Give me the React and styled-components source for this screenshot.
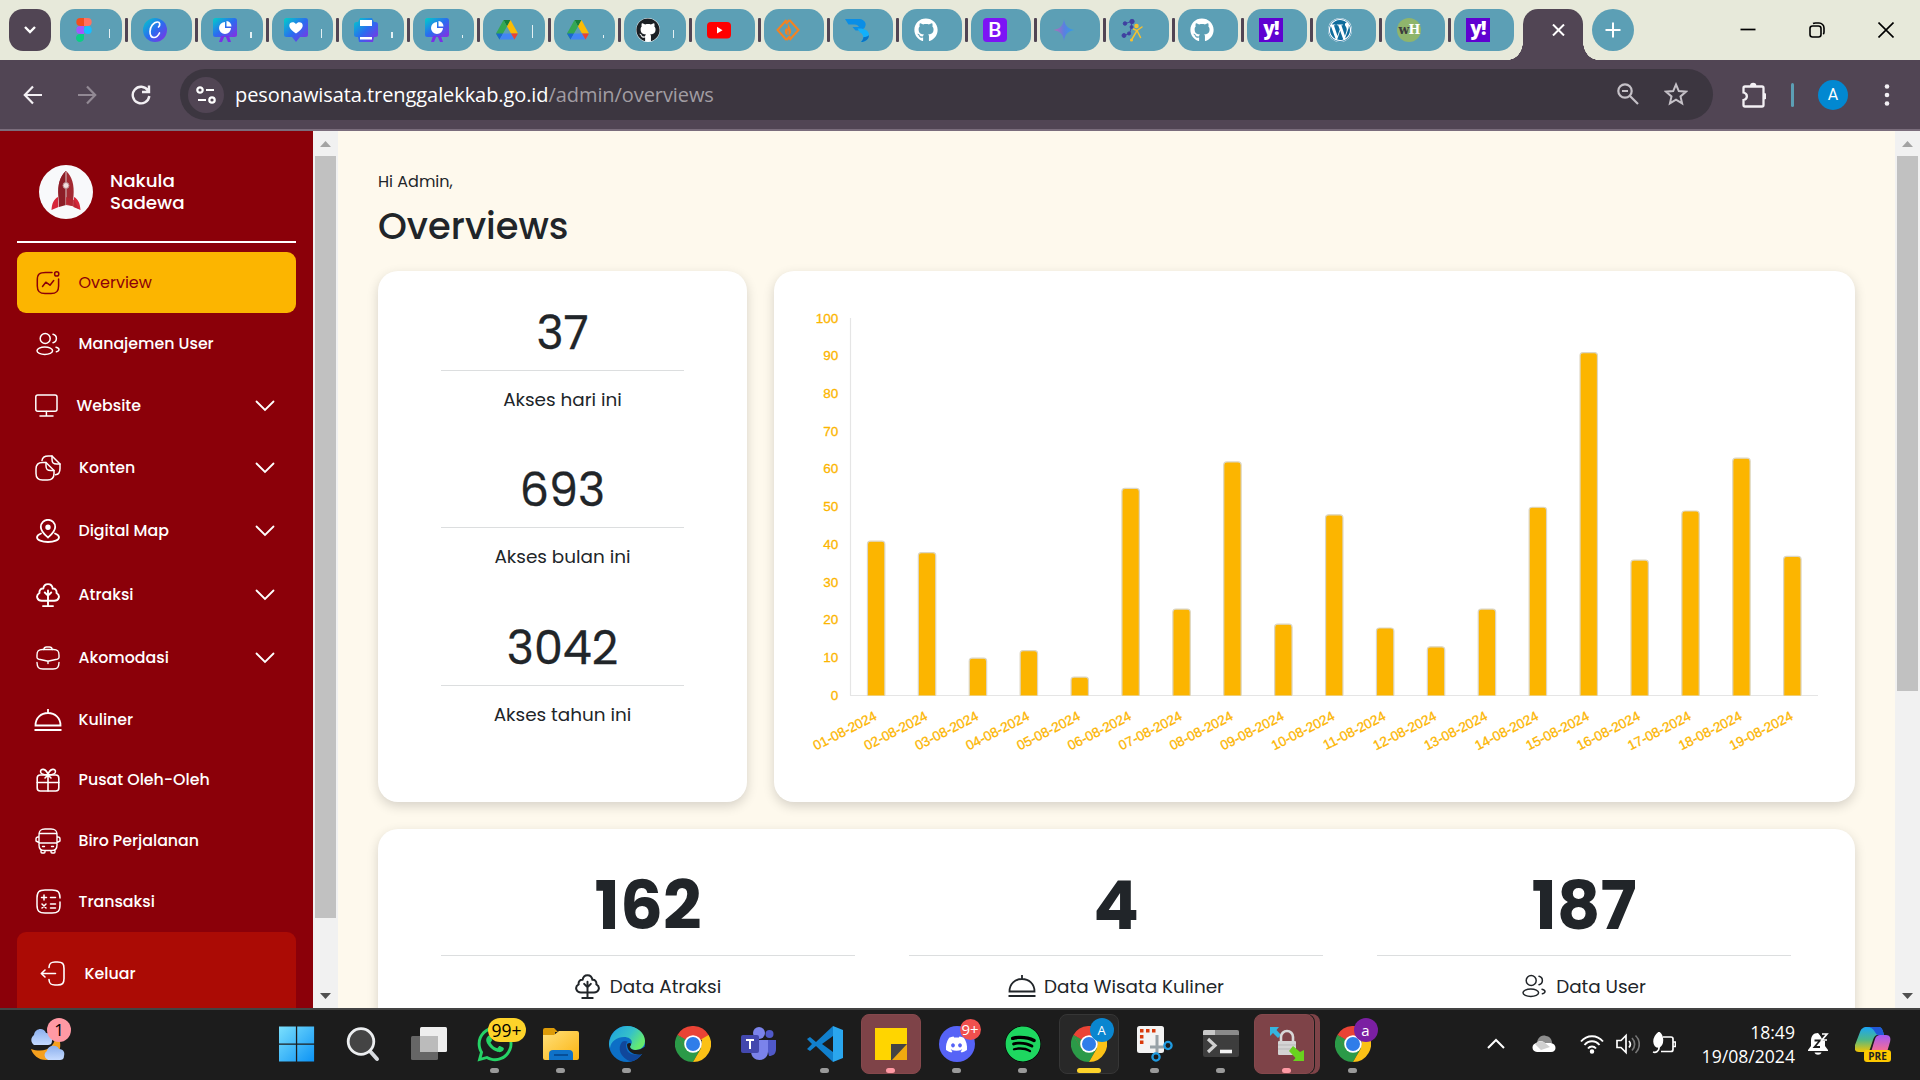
import React from 'react';
import styled, { createGlobalStyle } from 'styled-components';
import { FaGithub, FaWhatsapp, FaDiscord, FaSpotify, FaWordpress } from 'react-icons/fa';

const poppins = `Poppins, Inter, "Open Sans", sans-serif`;
const segoe = `"Open Sans", "Noto Sans", sans-serif`;

const Global = createGlobalStyle`
  * { box-sizing: border-box; }
  body { margin: 0; overflow: hidden; background: #fef9ed; }
  svg { display: block; flex: none; }
`;

const Screen = styled.div`
  width: 1920px;
  height: 1080px;
  display: flex;
  flex-direction: column;
  overflow: hidden;
  font-family: ${poppins};
  color: #212529;
`;

/* ---------- browser chrome ---------- */
const TabStrip = styled.div`
  height: 60px;
  flex: none;
  display: flex;
  align-items: center;
  padding-left: 9px;
  background: #e7e9da;
`;
const TabSearch = styled.div`
  width: 42px;
  height: 42px;
  margin-right: 9px;
  border-radius: 14px;
  background: #514554;
  display: grid;
  place-items: center;
`;
const Tab = styled.div`
  width: ${(p) => (p.$wide ? 61.55 : 60)}px;
  height: 42px;
  flex: none;
  border-radius: 15px;
  background: #5c9fb5;
  display: flex;
  align-items: center;
  padding-left: 12px;
`;
const TitleSliver = styled.i`
  width: ${(p) => p.$w || 1}px;
  height: ${(p) => p.$h}px;
  margin-left: 13px;
  margin-top: ${(p) => 16 - p.$h}px;
  align-self: center;
  background: #e4f0f3;
`;
const TabDivider = styled.i`
  width: 3px;
  height: 24px;
  flex: none;
  margin: 0 3px;
  border-radius: 1px;
  background: #514554;
`;
const TabGap = styled.i`
  width: 9px;
  flex: none;
`;
const ActiveTab = styled.div`
  position: relative;
  width: 60px;
  height: 51px;
  align-self: flex-end;
  flex: none;
  border-radius: 15px 15px 0 0;
  background: #514554;
  padding: 15px 0 0 26px;
  &::before,
  &::after {
    content: '';
    position: absolute;
    bottom: 0;
    width: 15px;
    height: 18px;
  }
  &::before {
    left: -15px;
    background: radial-gradient(ellipse 15px 18px at 0 0, transparent 98%, #514554 100%);
  }
  &::after {
    right: -15px;
    background: radial-gradient(ellipse 15px 18px at 100% 0, transparent 98%, #514554 100%);
  }
`;
const NewTab = styled.div`
  width: 42px;
  height: 42px;
  margin-left: 9px;
  border-radius: 50%;
  background: #5c9fb5;
  display: grid;
  place-items: center;
`;
const WindowButtons = styled.div`
  display: flex;
  margin-left: auto;
`;
const WindowButton = styled.div`
  width: 69px;
  height: 60px;
  display: grid;
  place-items: center;
`;

const Toolbar = styled.div`
  height: 71px;
  flex: none;
  display: flex;
  align-items: center;
  padding-left: 6px;
  background: #514554;
  border-bottom: 2px solid #7a6d7c;
`;
const NavButton = styled.div`
  width: 54px;
  display: grid;
  place-items: center;
  opacity: ${(p) => (p.$dim ? 0.4 : 1)};
`;
const AddressBar = styled.div`
  width: 1533px;
  height: 51px;
  margin-left: 12px;
  padding: 0 25px 0 8px;
  border-radius: 26px;
  background: #3c3640;
  display: flex;
  align-items: center;
`;
const SiteInfo = styled.div`
  width: 36px;
  height: 36px;
  border-radius: 50%;
  background: #514554;
  display: grid;
  place-items: center;
`;
const Url = styled.div`
  flex: 1;
  margin-left: 11px;
  font: 400 20px/30px ${segoe};
  letter-spacing: -0.08px;
  color: #a19da3;
  white-space: nowrap;
  span { color: #fff; }
`;
const BarIcons = styled.div`
  display: flex;
  gap: 24px;
  padding-bottom: 1px;
`;
const ToolbarEnd = styled.div`
  display: flex;
  align-items: center;
  margin-left: 27px;
`;
const Rule = styled.i`
  width: 3px;
  height: 24px;
  margin: 0 24px 0 25px;
  border-radius: 2px;
  background: #5c9fb5;
`;
const ProfileDot = styled.div`
  width: 30px;
  height: 30px;
  margin-right: 28px;
  border-radius: 50%;
  background: #0288d1;
  color: #fff;
  font: 400 16px/30px Roboto, sans-serif;
  text-align: center;
`;

/* ---------- page ---------- */
const Page = styled.div`
  height: 877px;
  flex: none;
  display: flex;
  overflow: hidden;
  background: #fef9ed;
`;
const Sidebar = styled.nav`
  width: 313px;
  flex: none;
  padding: 34px 17px 0;
  background: #8b0009;
  color: #fff;
`;
const Brand = styled.div`
  height: 76px;
  padding-left: 22px;
  display: flex;
  align-items: flex-start;
  gap: 17px;
`;
const BrandName = styled.div`
  padding-top: 5px;
  font-size: 18.3px;
  font-weight: 500;
  line-height: 22px;
`;
const Divider = styled.div`
  height: 2px;
  margin-bottom: 9px;
  background: #fff;
`;
const MenuItem = styled.div`
  height: ${(p) => p.$h}px;
  padding: 0 21px 0 ${(p) => 19 + (p.$shift || 0)}px;
  display: flex;
  align-items: center;
  border-radius: 9px;
  background: ${(p) => (p.$active ? '#fcb500' : 'transparent')};
  color: ${(p) => (p.$active ? '#8b0009' : '#fff')};
  font-size: ${(p) => (p.$active ? 16 : 15.8)}px;
  font-weight: ${(p) => (p.$active ? 400 : 500)};
`;
const MenuLabel = styled.span`
  flex: 1;
  margin-left: ${(p) => 18.5 + (p.$dx || 0)}px;
  white-space: nowrap;
`;
const Logout = styled(MenuItem)`
  height: 83px;
  margin-top: 1px;
  padding-left: 23px;
  border-radius: 9px 9px 0 0;
  background: #ab0b05;
`;

const Scrollbar = styled.div`
  width: 25px;
  flex: none;
  display: flex;
  flex-direction: column;
  align-items: center;
  background: #f1f1f1;
`;
const ScrollArrow = styled.div`
  height: 25px;
  flex: none;
  display: grid;
  place-items: center;
`;
const ScrollThumb = styled.div`
  width: 21px;
  height: ${(p) => p.$h}px;
  background: #c1c1c1;
`;
const Grow = styled.div`
  flex: 1;
`;

const Main = styled.main`
  width: 1557px;
  flex: none;
  padding: 38px 40px 0;
`;
const Greeting = styled.div`
  font-size: 16px;
  line-height: 26px;
`;
const Title = styled.h1`
  margin: 8px 0 22px;
  font-size: 36.8px;
  font-weight: 500;
  line-height: 46px;
`;
const TopCards = styled.div`
  display: grid;
  grid-template-columns: 369px 1081px;
  gap: 27px;
  height: 531px;
`;
const Card = styled.section`
  border-radius: 20px;
  background: #fff;
  box-shadow: 0 4px 12px rgba(0, 0, 0, 0.16);
`;
const AccessCard = styled(Card)`
  padding: 34px 63px 0;
`;
const Access = styled.div`
  height: 157.4px;
  text-align: center;
`;
const AccessValue = styled.div`
  height: 66px;
  border-bottom: 1px solid #dcdedf;
  font-size: 46px;
  font-weight: 400;
  line-height: 56px;
  -webkit-text-stroke: 0.3px #212529;
`;
const AccessLabel = styled.div`
  margin-top: 15px;
  font-size: 18.4px;
  line-height: 28px;
`;
const TotalsCard = styled(Card)`
  height: 260px;
  margin-top: 27px;
  padding: 37px 63px 0;
  display: grid;
  grid-template-columns: repeat(3, 414px);
  column-gap: 54px;
  text-align: center;
`;
const TotalValue = styled.div`
  height: 90px;
  border-bottom: 1px solid #dcdedf;
  font-size: 67.5px;
  font-weight: 700;
  line-height: 80px;
`;
const TotalLabel = styled.div`
  display: flex;
  justify-content: center;
  align-items: center;
  gap: ${(p) => p.$gap || 10}px;
  height: 28px;
  margin-top: 16px;
  font-size: 18.4px;
  white-space: nowrap;
`;

/* ---------- taskbar ---------- */
const Taskbar = styled.div`
  height: 72px;
  flex: none;
  display: flex;
  padding-left: 26px;
  border-top: 2px solid #434343;
  background: #1c1c1c;
  color: #fff;
  font-family: ${segoe};
`;
const Weather = styled.div`
  position: relative;
  width: 44px;
  height: 70px;
  margin-right: 193.5px;
  padding-top: 15px;
`;
const Apps = styled.div`
  display: flex;
`;
const AppSlot = styled.div`
  position: relative;
  width: 66px;
  height: 70px;
  display: grid;
  place-items: center;
`;
const AppTile = styled.div`
  width: 60px;
  height: 60px;
  margin-top: -2px;
  display: grid;
  place-items: center;
  border-radius: 8px;
  border: 1px solid ${(p) => (p.$tone === 'alert' ? '#85484c' : p.$tone ? '#363636' : 'transparent')};
  background: ${(p) => (p.$tone === 'alert' ? '#7e4348' : p.$tone ? '#282828' : 'transparent')};
  box-shadow: ${(p) => (p.$stack ? '1px 0 0 #1c1c1c, 6px 0 0 #7e4348' : 'none')};
  margin-left: ${(p) => (p.$stack ? -6 : 0)}px;
  padding-left: ${(p) => (p.$stack ? 6 : 0)}px;
`;
const RunDot = styled.i`
  position: absolute;
  bottom: 7px;
  left: 50%;
  width: ${(p) => (p.$wide ? 24 : 9)}px;
  height: 5px;
  margin-left: ${(p) => (p.$wide ? -12 : -4.5)}px;
  border-radius: 3px;
  background: ${(p) => p.$color || '#9a9a9a'};
`;
const Badge = styled.span`
  position: absolute;
  top: ${(p) => p.$top || 8}px;
  left: ${(p) => p.$left}px;
  min-width: ${(p) => p.$size || 24}px;
  height: ${(p) => p.$size || 24}px;
  padding: 0 ${(p) => p.$pad || 0}px;
  border-radius: 12px;
  background: ${(p) => p.$bg};
  color: ${(p) => p.$fg || '#fff'};
  font-size: ${(p) => p.$fs || 15}px;
  line-height: ${(p) => p.$size || 24}px;
  text-align: center;
  white-space: nowrap;
`;
const Tray = styled.div`
  display: flex;
  align-items: center;
  margin-left: auto;
  padding: 0 29px 2px 0;
`;
const Clock = styled.div`
  width: 106px;
  margin-left: 13px;
  text-align: right;
  font-size: 17.6px;
  line-height: 24px;
`;

/* ---------- icons ---------- */
const Line = ({ size = 24, w = 1.5, children, box = 24 }) => (
  <svg width={size} height={size} viewBox={`0 0 ${box} ${box}`} fill="none" stroke="currentColor" strokeWidth={w} strokeLinecap="round" strokeLinejoin="round">
    {children}
  </svg>
);
const OverviewIcon = () => (
  <Line>
    <path d="M16 1.4H9.5C3.5 1.4 1.3 3.2 1.3 9v6c0 5.5 2.200 7.600 7.700 7.600h6c5.500 0 7.600-2.100 7.600-7.600V8" />
    <circle cx="20.7" cy="2.9" r="2.100" />
    <path d="M6.500 15.500l3.300-4.300 4.200 3 3.700-4.700" />
  </Line>
);
const UsersIcon = ({ size = 24 }) => (
  <Line size={size}>
    <circle cx="9.200" cy="6.500" r="5" />
    <ellipse cx="8.800" cy="18.800" rx="7.800" ry="3.700" />
    <path d="M17 2.300a4.300 4.300 0 0 1 0 8.400M20 15.200c1.800.4 3 1.200 3 2.300s-1 1.900-2.600 2.300" />
  </Line>
);
const MonitorIcon = () => (
  <Line size={23} box={23}>
    <rect x=".8" y="1" width="21.200" height="16.200" rx="2" />
    <path d="M11.400 17.500v4.500M5 22h13" />
  </Line>
);
const CopyIcon = () => (
  <Line size={26} box={26}>
    <path d="M11 7.500H7.500C3 7.500 1 9.500 1 14v4.500C1 23 3 25 7.500 25h5c4.500 0 6.500-2 6.500-6.500V15.500z" />
    <path d="M11 7.500v3.200c0 3.600 1.200 4.800 4.800 4.800H19" />
    <path d="M7 5.500c.4-3.300 2.400-4.500 6.300-4.500H17l8 8v4.500c0 4-1.700 6-4.600 6.200" />
    <path d="M17 1v3.200C17 7.800 18.200 9 21.800 9H25" />
  </Line>
);
const MapIcon = () => (
  <Line w={1.8}>
    <path d="M12 18.500C8.500 15.500 4.800 12.500 4.800 8a7.200 7.200 0 0 1 14.400 0c0 4.500-3.700 7.500-7.200 10.500z" />
    <circle cx="12" cy="8.300" r="1.800" fill="currentColor" />
    <path d="M5 14.500C2.500 15.500 1 16.500 1 18.200 1 21 5.900 23 12 23s11-2 11-4.800c0-1.700-1.500-2.700-4-3.700" />
  </Line>
);
const TreeIcon = ({ size = 25 }) => (
  <Line size={size} w={1.9}>
    <path d="M7 17.700C1 18.500-.8 12.500 3.500 10 3 7.200 5 5.200 7.300 5.600 8-.4 16-.4 16.700 5.600 19 5.200 21 7.200 20.500 10c4.300 2.500 2.500 8.500-3.500 7.700z" />
    <path d="M12 7.500V23M8.800 9.500L12 12.700l3.200-3.200M7 23.100h10" />
  </Line>
);
const CaseIcon = () => (
  <Line w={1.4}>
    <path d="M7.800 3.500C8 1.500 9 1 10.500 1h3c1.500 0 2.500.5 2.700 2.500" />
    <path d="M1 9c0-4 1.300-5.500 5.500-5.500h11C21.700 3.500 23 5 23 9v2.500c0 1-.8 1.500-2 1.800l-7 1.500c-1.300.3-2.700.3-4 0l-7-1.500C1.800 13 1 12.500 1 11.500zM1 16.500C1.200 21.500 2.500 23 7 23h10c4.500 0 5.800-1.500 6-6.500M12 15v2.500" />
  </Line>
);
const ClocheIcon = () => (
  <svg width="28" height="24" viewBox="0 0 28 24" fill="none" stroke="currentColor" strokeWidth="1.8">
    <path d="M1.500 17.500C1.500 10 7 5 14 5s12.500 5 12.500 12.500zM14 5V1M.5 22h27" />
  </svg>
);
const GiftIcon = () => (
  <Line w={1.6}>
    <rect x="1.200" y="7" width="21.600" height="16" rx="3" />
    <path d="M1.200 14.500h21.600M12 7v16M12 6.800C9 6.800 5 7 4.600 4 4 .2 10 0 12 6.500c2-6.500 8-6.300 7.400-2.500-.4 3-4.400 2.800-7.400 2.800zM9 10l3-3 3 3" />
  </Line>
);
const BusIcon = () => (
  <Line size={26} w={1.4} box={26}>
    <path d="M4 7c0-4.500 1.500-6 6-6h6c4.500 0 6 1.500 6 6v10c0 3.500-1.500 5.500-5 5.500H9c-3.500 0-5-2-5-5.500zM4 5.500h18M4 15h18M4 9H3a2 2 0 0 0-2 2v2l3 1.500M22 9h1a2 2 0 0 1 2 2v2l-3 1.500M7.500 18.500h2M16.500 18.500h2M6 22v2c0 .6.400 1 1 1h2c.6 0 1-.4 1-1v-1.500M20 22v2c0 .6-.4 1-1 1h-2c-.6 0-1-.4-1-1v-1.500" />
  </Line>
);
const CalcIcon = () => (
  <Line size={25} w={1.5} box={25}>
    <path d="M24 9c0-6-2-8-8-8H9C3 1 1 3 1 9v7c0 6 2 8 8 8h7c6 0 8-2 8-8v-3" />
    <path d="M5.500 8.500h5M8 6v5M14.500 8.500h5M14.500 15h5M14.500 19h5M6 15l4 4M10 15l-4 4" />
  </Line>
);
const LogoutIcon = () => (
  <Line size={25} w={1.6} box={25}>
    <path d="M9 6.500C9.200 2.500 10.500 1 15 1h2.500C22.500 1 24 2.500 24 7.500v10c0 5-1.500 6.500-6.500 6.500H15c-4.500 0-5.800-1.500-6-5.500M15.500 12.500H1.500M5 9l-3.700 3.500L5 16" />
  </Line>
);
const Chevron = () => (
  <svg width="20" height="12" viewBox="0 0 20 12" fill="none" stroke="#fff" strokeWidth="1.8" strokeLinecap="round">
    <path d="M1.500 1.500L10 10l8.500-8.500" />
  </svg>
);

/* ---------- favicons ---------- */
const Fav = ({ children, box = 24 }) => (
  <svg width="24" height="24" viewBox={`0 0 ${box} ${box}`}>{children}</svg>
);
const Figma = () => (
  <Fav>
    <path d="M12 0H8.300a4 4 0 0 0 0 8H12z" fill="#f24e1e" />
    <path d="M12 0h3.700a4 4 0 0 1 0 8H12z" fill="#ff7262" />
    <path d="M12 8H8.300a4 4 0 0 0 0 8H12z" fill="#a259ff" />
    <circle cx="15.800" cy="12" r="4" fill="#1abcfe" />
    <path d="M12 16H8.300a4 4 0 1 0 3.700 4z" fill="#0acf83" />
  </Fav>
);
const Gradients = () => (
  <svg width="0" height="0" style={{ position: 'absolute' }}>
    <defs>
      <linearGradient id="canva" x1="0" y1="0" x2="1" y2="1">
        <stop offset="0" stopColor="#00d0c8" />
        <stop offset=".5" stopColor="#2a6cf0" />
        <stop offset="1" stopColor="#8a2be2" />
      </linearGradient>
      <linearGradient id="gem" x1="0" y1="0" x2="1" y2="0">
        <stop offset="0" stopColor="#c06ab0" />
        <stop offset=".5" stopColor="#5a80e0" />
        <stop offset="1" stopColor="#2fa0e8" />
      </linearGradient>
      <linearGradient id="win" x1="0" y1="0" x2="1" y2="1">
        <stop offset="0" stopColor="#7be0fd" />
        <stop offset="1" stopColor="#0c93f5" />
      </linearGradient>
      <linearGradient id="edgeTop" x1="0" y1="0" x2="1" y2=".5">
        <stop offset="0" stopColor="#1b9de2" />
        <stop offset=".6" stopColor="#35c1c9" />
        <stop offset="1" stopColor="#66eb6e" />
      </linearGradient>
      <linearGradient id="folder" x1="0" y1="0" x2="1" y2="1">
        <stop offset="0" stopColor="#ffe07a" />
        <stop offset="1" stopColor="#fbb411" />
      </linearGradient>
      <linearGradient id="cloud" x1="0" y1="0" x2="0" y2="1">
        <stop offset="0" stopColor="#8cb0ee" />
        <stop offset="1" stopColor="#c6dbff" />
      </linearGradient>
      <linearGradient id="copA" x1="0" y1="0" x2="0" y2="1">
        <stop offset="0" stopColor="#1ba5f5" />
        <stop offset=".5" stopColor="#4cb88a" />
        <stop offset="1" stopColor="#f5c400" />
      </linearGradient>
      <linearGradient id="copB" x1="0" y1="0" x2="0" y2="1">
        <stop offset="0" stopColor="#a259f5" />
        <stop offset="1" stopColor="#ff6f8a" />
      </linearGradient>
    </defs>
  </svg>
);
const Canva = () => (
  <Fav>
    <circle cx="12" cy="12" r="12" fill="url(#canva)" />
    <path d="M15.500 9c2-2 1.500-5-1-5C10.500 4 7 9 7 13.500c0 3.500 1.500 6 4 6 2.300 0 4.200-1.700 5.500-4.500" fill="none" stroke="#fff" strokeWidth="1.700" strokeLinecap="round" />
  </Fav>
);
const Deck = () => (
  <Fav>
    <rect width="24" height="19" rx="2.500" fill="url(#canva)" />
    <path d="M8 18l-2 6h3l2.500-6zM16 18l2 6h-3l-2.500-6z" fill="#7a2fe8" />
    <path d="M12 10V4a6 6 0 1 0 6 6z" fill="#fff" />
    <path d="M13.500 8.500V3a5.500 5.500 0 0 1 5 5.500z" fill="#fff" />
  </Fav>
);
const Heart = () => (
  <Fav>
    <path d="M2.500 0h19A2.500 2.500 0 0 1 24 2.500v14a2.500 2.500 0 0 1-2.500 2.500H16l-4 5-4-5H2.500A2.500 2.500 0 0 1 0 16.500v-14A2.500 2.500 0 0 1 2.500 0z" fill="url(#canva)" />
    <path d="M12 15.500C8 12.500 5.300 10.500 5.300 7.500c0-3.500 4.700-4.500 6.700-1.300 2-3.200 6.700-2.200 6.700 1.300 0 3-2.700 5-6.700 8z" fill="#fff" />
  </Fav>
);
const Print = () => (
  <Fav>
    <path d="M6 0h12l2 4h1.500A2.500 2.500 0 0 1 24 6.500v10a2.500 2.500 0 0 1-2.500 2.500H20l-1 5H5l-1-5H2.500A2.500 2.500 0 0 1 0 16.500v-10A2.500 2.500 0 0 1 2.500 4H4z" fill="url(#canva)" />
    <path d="M6 2h12v6H6zM6 19h12v2.500H6z" fill="#fff" />
  </Fav>
);
const Drive = () => (
  <Fav>
    <path d="M8.500 2h7L12 8.500z" fill="#188038" />
    <path d="M8.500 2L1 15.500l3.500 6L12 8.500z" fill="#34a853" />
    <path d="M15.500 2L23 15.500h-7L12 8.500z" fill="#fbbc04" />
    <path d="M1 15.500h7l-3.500 6z" fill="#1967d2" />
    <path d="M8 15.500h8l3.500 6h-15z" fill="#4285f4" />
    <path d="M16 15.500h7l-3.500 6z" fill="#ea4335" />
  </Fav>
);
const GithubDisc = styled.div`
  width: 24px;
  height: 24px;
  border-radius: 50%;
  background: ${(p) => p.$bg || 'transparent'};
  color: ${(p) => p.$fg};
`;
const Youtube = () => (
  <Fav>
    <rect y="4" width="24" height="16.500" rx="4" fill="#f00" />
    <path d="M10 8.800l5.500 3.400-5.500 3.400z" fill="#fff" />
  </Fav>
);
const Fire = () => (
  <Fav>
    <path d="M10.500 2L1.500 12l9 10M13.500 2l9 10-9 10M13.500 2L10 6M10.500 22l3.500-4" fill="none" stroke="#f58220" strokeWidth="2" />
    <path d="M12.300 5.500c.5 3 2.900 5 2.900 8 0 2-1.400 3.500-3.200 3.500s-3.200-1.500-3.200-3.500c0-1.800 1-2.800 1.800-3.800.2.800.4 1.300.8 1.600.5-1.700.2-3.800.9-5.800z" fill="#f58220" />
    <path d="M12 12.500v4" stroke="#5c9fb5" strokeWidth="1" />
  </Fav>
);
const BlueMark = () => (
  <Fav>
    <path d="M0 1h14.500c5 .5 8 4.500 5 9-3 2.500-6.500 2.500-9 2.500L7.500 9H14c-1.500-2.500-3.500-2.500-6-2.500H3.500z" fill="#0a8ee6" />
    <path d="M12.500 10.500c7-.5 11.500 2 11.500 6.500s-3.500 6.500-8.500 7.500c3.500-4 3.500-8-.5-10z" fill="#12b0fa" />
    <path d="M24 17c0 4.500-3.500 6.500-8.500 7.500 2-2 3-4 3-5.500 2.500 0 4.500-.5 5.500-2z" fill="#0a72c4" />
  </Fav>
);
const TextFav = styled.div`
  width: 24px;
  height: 24px;
  border-radius: ${(p) => p.$r || 0};
  background: ${(p) => p.$bg};
  color: #fff;
  font: ${(p) => p.$font};
  letter-spacing: ${(p) => p.$ls || 0};
  text-align: center;
  white-space: nowrap;
  span { color: #3c3c3c; }
`;
const Gem = () => (
  <Fav><path d="M12 1c.8 6.500 4 10 10.500 11-6.500 1-9.700 4.500-10.500 11-.8-6.500-4-10-10.500-11C8 11 11.200 7.500 12 1z" fill="url(#gem)" /></Fav>
);
const Network = () => (
  <Fav>
    <g stroke="#3f3fa0" strokeWidth=".9" fill="#3f3fa0">
      <path d="M4 5.500l6.500-2 0 5.500-2 6.500-5.500 2" fill="none" />
      <circle cx="4" cy="5.500" r="1.800" /><circle cx="11" cy="3.500" r="2.200" /><circle cx="3" cy="17.500" r="2" /><circle cx="8" cy="15.500" r="1.600" /><circle cx="10.500" cy="9" r="1.500" />
    </g>
    <g stroke="#f6c12f" strokeWidth="1.500" fill="#f6c12f" strokeLinecap="round">
      <path d="M21 9l-5 3.500-5.500 9.500M12.500 11l3.500 1.500 3.500 7" fill="none" /><circle cx="15.500" cy="8" r="1.500" /><circle cx="10.500" cy="22" r=".8" />
    </g>
  </Fav>
);
const Wordpress = styled.div`
  width: 24px;
  height: 24px;
  border-radius: 50%;
  background: #fff;
  color: #0f6c9c;
`;
const Yahoo = () => (
  <TextFav $bg="#5f01d1" $font='800 19px/21px "Open Sans", sans-serif' $ls="-1px">y!</TextFav>
);

const tabs = [
  { icon: <Figma />, h: 9 },
  { icon: <Canva /> },
  { icon: <Deck />, h: 6, w: 2 },
  { icon: <Heart />, h: 9 },
  { icon: <Print />, h: 6, w: 2 },
  { icon: <Deck />, h: 3 },
  { icon: <Drive />, h: 13 },
  { icon: <Drive />, h: 3 },
  { icon: <GithubDisc $bg="#fff" $fg="#1b1f24"><FaGithub size={24} /></GithubDisc>, h: 8 },
  { icon: <Youtube /> },
  { icon: <Fire /> },
  { icon: <BlueMark /> },
  { icon: <GithubDisc $fg="#fff"><FaGithub size={24} /></GithubDisc> },
  { icon: <TextFav $bg="#7d14f5" $r="4px" $font='500 21px/24px Roboto, sans-serif'>B</TextFav> },
  { icon: <Gem /> },
  { icon: <Network /> },
  { icon: <GithubDisc $fg="#fff"><FaGithub size={24} /></GithubDisc> },
  { icon: <Yahoo /> },
  { icon: <Wordpress><FaWordpress size={24} /></Wordpress> },
  { icon: <TextFav $bg="#8fb56c" $r="50%" $font='700 12.5px/23px "DejaVu Serif", serif' $ls="-0.8px"><span>w</span>H</TextFav> },
  { icon: <Yahoo /> },
];

const menu = [
  { label: 'Overview', icon: <OverviewIcon />, h: 61, active: true },
  { label: 'Manajemen User', icon: <UsersIcon />, h: 61 },
  { label: 'Website', icon: <MonitorIcon />, h: 63, sub: true, shift: -1, dx: 0 },
  { label: 'Konten', icon: <CopyIcon />, h: 61, sub: true, shift: -1, dx: -0.5 },
  { label: 'Digital Map', icon: <MapIcon />, h: 65, sub: true },
  { label: 'Atraksi', icon: <TreeIcon size={24} />, h: 63, sub: true },
  { label: 'Akomodasi', icon: <CaseIcon />, h: 63, sub: true },
  { label: 'Kuliner', icon: <ClocheIcon />, h: 61, shift: -2, dx: -2 },
  { label: 'Pusat Oleh-Oleh', icon: <GiftIcon />, h: 59 },
  { label: 'Biro Perjalanan', icon: <BusIcon />, h: 63, shift: -1, dx: -1 },
  { label: 'Transaksi', icon: <CalcIcon />, h: 59, shift: -0.5, dx: -0.5 },
];

const visits = [41, 38, 10, 12, 5, 55, 23, 62, 19, 48, 18, 13, 23, 50, 91, 36, 49, 63, 37];

const VisitsChart = () => {
  const left = 77;
  const base = 424.5;
  const unit = 3.773;
  const step = 50.9;
  return (
    <svg width="1081" height="531" viewBox="0 0 1081 531" fontFamily='Arial, "Liberation Sans", sans-serif' fontSize="13.5" fill="#fcb500">
      <path d={`M${left - 0.5} 47V${base}M${left - 1} ${base}H1044`} stroke="#e5e5e5" strokeWidth="1.200" fill="none" />
      {Array.from({ length: 11 }, (_, i) => (
        <text key={i} x="64.2" y={base + 4.3 - i * 10 * unit} textAnchor="end" stroke="#fcb500" strokeWidth=".3">{i * 10}</text>
      ))}
      {visits.map((v, i) => {
        const cx = left + step * (i + 0.5) - 0.3;
        const top = base - v * unit + 0.4;
        const day = String(i + 1).padStart(2, '0');
        return (
          <g key={i}>
            <path d={`M${cx - 8.7} ${base}V${top + 3}q0-3 3-3h11.4q3 0 3 3V${base}`} stroke="#dcd6c4" strokeWidth="1.2" />
            <text transform={`translate(${cx + 1.5} ${base + 23.7}) rotate(-27)`} textAnchor="end" stroke="#fcb500" strokeWidth=".3">{`${day}-08-2024`}</text>
          </g>
        );
      })}
    </svg>
  );
};

const Rocket = () => (
  <svg width="54" height="54" viewBox="0 0 54 54">
    <circle cx="27" cy="27" r="27" fill="#f8f9fb" />
    <path d="M19 32c-4 2-6 6-6.500 13l7-3zM35 32c4 2 6 6 6.500 13l-7-3z" fill="#d7263a" />
    <path d="M27 6c-6 5-8.500 14-7.500 25l1 10 6.500-2 6.500 2 1-10C35.500 20 33 11 27 6z" fill="#a32a33" />
    <path d="M27 6v34l-7 2-.5-11C18.500 20 21 11 27 6z" fill="#8c1d27" />
    <path d="M27 7v33" stroke="#c9a3a5" strokeWidth="1.300" />
    <circle cx="27" cy="20.500" r="3" fill="#f2dede" stroke="#b98c8f" />
    <path d="M27 32l8 3 5 9-7-3-6-1z" fill="#b72633" opacity=".85" />
  </svg>
);

const Arrow = ({ down }) => (
  <svg width="11" height="6" viewBox="0 0 11 6"><path d={down ? 'M0 0h11L5.500 6z' : 'M0 6h11L5.500 0z'} fill={down ? '#505050' : '#a3a3a3'} /></svg>
);

/* ---------- taskbar drawings ---------- */
const Pic = ({ children, size = 36 }) => <svg width={size} height={size} viewBox="0 0 36 36">{children}</svg>;
const Chrome = () => (
  <Pic>
    <path d="M18 18L2.400 9A18 18 0 0 1 33.600 9z" fill="#ea4335" />
    <path d="M2.400 9A18 18 0 0 0 18 36l8-14z" fill="#2b9a48" />
    <path d="M33.600 9A18 18 0 0 1 18 36l7.800-13.500L27 14 18 9z" fill="#fbc116" />
    <path d="M18 9h15.600L18 18 2.400 9 10 22z" fill="#ea4335" />
    <path d="M2.400 9L10.200 22.500 18 18z" fill="#2b9a48" />
    <circle cx="18" cy="18" r="8.800" fill="#fff" />
    <circle cx="18" cy="18" r="7" fill="#2f7de9" />
  </Pic>
);
const Windows = () => (
  <Pic><path d="M0 .5H16.900V17.400H0zM18.200.5H35.100V17.400H18.200zM0 18.700H16.900V35.600H0zM18.200 18.700H35.100V35.600H18.200z" fill="url(#win)" /></Pic>
);
const Search = () => (
  <Pic>
    <path d="M24 24l8 9" stroke="#d8dbe0" strokeWidth="4" strokeLinecap="round" />
    <circle cx="16" cy="15.500" r="12.800" fill="#444" stroke="#eceef0" strokeWidth="2.800" />
  </Pic>
);
const TaskView = () => (
  <Pic>
    <rect x="9" y="1" width="27" height="25" rx="1.500" fill="#eee" />
    <rect x="0" y="10" width="27" height="24" rx="1.500" fill="#666" />
    <rect x="9" y="10" width="18" height="16" fill="#bbb" />
  </Pic>
);
const Explorer = () => (
  <Pic>
    <path d="M0 4q0-2 2-2h9l4 4h-3v6H0z" fill="#dd9b08" />
    <path d="M0 9h11l5-4h18q2 0 2 2v25q0 2-2 2H2q-2 0-2-2z" fill="url(#folder)" />
    <path d="M6 34V28q0-4 4-4h16q4 0 4 4v6z" fill="#0f72c8" />
    <path d="M11 29h14" stroke="#064a91" strokeWidth="1.800" />
  </Pic>
);
const Edge = () => (
  <Pic>
    <circle cx="18" cy="18" r="18" fill="#0c6fc6" />
    <path d="M1 13C4 4 11 0 18 0c10 0 18 7 18 15 0 6-5 9-9 9-5 0-7-2-5.500-4.500C25 15 21 11 15 11 8 11 2 15 1 22c-1.500-4-1-6 0-9z" fill="url(#edgeTop)" />
    <path d="M13 16c-5 6-2 16 9 19.500 5-1 9-4 11-8-5 2-14 2-15.500-5-1-3-.5-5 1-7-2-.8-4-.8-5.500.5z" fill="#10479b" />
    <path d="M18 19c0-2 4-3 4-.5 0 1-2 2 0 4 3 2.500 9 2 14-2V27c-6 3-17 2-18-8z" fill="#1c1c1c" />
  </Pic>
);
const Teams = () => (
  <Pic>
    <circle cx="28.500" cy="8" r="4" fill="#5059c9" />
    <path d="M24 14h11v9c0 5-3 7-7 7z" fill="#5059c9" />
    <circle cx="18" cy="7" r="6" fill="#7b83eb" />
    <path d="M10 14h17v11c0 6-4 9-8.500 9S10 31 10 25z" fill="#7b83eb" />
    <rect y="9" width="18" height="18" rx="2" fill="#4348ae" />
    <path d="M5 14h8M9 14v9" stroke="#fff" strokeWidth="2" />
  </Pic>
);
const VSCode = () => (
  <Pic>
    <path d="M26 0L9 16 3 11 0 13l5 5-5 5 3 2 6-5 17 16V26L15 18l11-8z" fill="#1180cd" />
    <path d="M26 0l10 4v28l-10 4z" fill="#2aa6ee" />
  </Pic>
);
const Sticky = () => (
  <Pic>
    <path d="M2 2h32v17l-15 15H2z" fill="#ffd500" />
    <path d="M18 34V18h16v16z" fill="#efaa10" />
    <path d="M18 18h16L19 34h-1z" fill="#444" />
  </Pic>
);
const Disc = styled.div`
  width: 36px;
  height: 36px;
  border-radius: 50%;
  background: ${(p) => p.$bg};
  color: ${(p) => p.$fg};
  display: grid;
  place-items: center;
`;
const Snip = () => (
  <Pic>
    <rect x="0" y="0" width="27" height="27" rx="2.500" fill="#f3f3f3" />
    <path d="M3 4.700h16.500" stroke="#d93a0b" strokeWidth="3.500" strokeDasharray="3.500 2.500" />
    <path d="M4.700 9v10" stroke="#d93a0b" strokeWidth="3.500" strokeDasharray="3.500 2" />
    <path d="M20 9v18M13 21h15" stroke="#98a2a8" strokeWidth="3" />
    <circle cx="31" cy="19.500" r="3.600" fill="none" stroke="#1f9ae0" strokeWidth="2.300" />
    <circle cx="19" cy="31" r="3.600" fill="none" stroke="#1f9ae0" strokeWidth="2.300" />
  </Pic>
);
const Terminal = () => (
  <Pic>
    <rect y="4" width="36" height="27" rx="2" fill="#3d3d3d" />
    <path d="M0 9V6q0-2 2-2h32q2 0 2 2v3z" fill="#8a8a8a" />
    <path d="M0 9V6q0-2 2-2h10v5z" fill="#c8c8c8" />
    <path d="M5 13l7 6.500L5 26" stroke="#d0d0d0" strokeWidth="3.200" fill="none" />
    <path d="M17 25.500h12" stroke="#f2f2f2" strokeWidth="3.600" />
  </Pic>
);
const Lock = () => (
  <Pic>
    <path d="M1 1h9l-2.500 3L12 9l-3 3-5-5-3 3z" fill="#35b5e0" />
    <path d="M12 16v-5a6 6 0 0 1 12 0v5" fill="none" stroke="#d8d8d8" strokeWidth="2.600" />
    <rect x="9" y="15" width="18" height="14" rx="1" fill="#d4d4d4" />
    <path d="M9 19h18M9 23h18" stroke="#b7b7b7" strokeWidth="1" />
    <path d="M24 20l7 6 4-2v11H24l2.500-3-6.500-7z" fill="#69d21e" />
  </Pic>
);
const apps = [
  { icon: <Windows /> },
  { icon: <Search /> },
  { icon: <TaskView /> },
  { icon: <FaWhatsapp size={40} color="#25d366" />, dot: true, badge: <Badge $left={26} $pad={4} $bg="#fdd32a" $fg="#000" $fs={17.5}>99+</Badge> },
  { icon: <Explorer />, dot: true },
  { icon: <Edge />, dot: true },
  { icon: <Chrome /> },
  { icon: <Teams /> },
  { icon: <VSCode />, dot: true },
  { icon: <Sticky />, dot: true, color: '#ff99a4', tone: 'alert' },
  { icon: <Disc $bg="#5663f7" $fg="#fff"><FaDiscord size={23} /></Disc>, dot: true, badge: <Badge $left={36} $top={9} $size={21} $bg="#f0504e" $fs={15}>9+</Badge> },
  { icon: <Disc $bg="#000" $fg="#1ed760"><FaSpotify size={36} /></Disc>, dot: true },
  { icon: <Chrome />, dot: true, wide: true, color: '#fdd32a', tone: 'active', badge: <Badge $left={34} $bg="#0a86d0" $fs={13}>A</Badge> },
  { icon: <Snip />, dot: true },
  { icon: <Terminal />, dot: true },
  { icon: <Lock />, dot: true, color: '#ff99a4', tone: 'alert', stack: true },
  { icon: <Chrome />, dot: true, badge: <Badge $left={34} $bg="#7b1fa2" $fs={15}>a</Badge> },
];

const Glyph = styled.div`
  width: 24px;
  height: 24px;
  margin-left: ${(p) => p.$ml || 0}px;
  margin-right: ${(p) => p.$mr || 0}px;
`;
const PreTag = styled.span`
  position: absolute;
  left: 9px;
  bottom: 0;
  width: 27px;
  height: 12px;
  border-radius: 3px;
  background: #fdc800;
  color: #222;
  font: 700 10px/12px ${segoe};
  text-align: center;
`;
const Copilot = styled.div`
  position: relative;
  width: 36px;
  height: 36px;
  margin-left: 25px;
`;

export default function App() {
  return (
    <Screen>
      <Global />
      <Gradients />
      <TabStrip>
        <TabSearch>
          <svg width="14" height="10" viewBox="0 0 14 10"><path d="M2 2l5 5 5-5" stroke="#fff" strokeWidth="2.400" fill="none" /></svg>
        </TabSearch>
        {tabs.map((t, i) => (
          <React.Fragment key={i}>
            <Tab $wide={i < 9}>
              {t.icon}
              {t.h && <TitleSliver $h={t.h} $w={t.w} />}
            </Tab>
            {i < tabs.length - 1 ? <TabDivider /> : <TabGap />}
          </React.Fragment>
        ))}
        <ActiveTab>
          <svg width="20" height="12" viewBox="0 0 20 12"><path d="M4 .5l11 11M15 .5l-11 11" stroke="#fff" strokeWidth="2" /></svg>
        </ActiveTab>
        <NewTab>
          <svg width="16" height="16" viewBox="0 0 16 16"><path d="M8 .5v15M.5 8h15" stroke="#fff" strokeWidth="2" /></svg>
        </NewTab>
        <WindowButtons>
          <WindowButton><svg width="16" height="16" viewBox="0 0 16 16"><path d="M.5 7.500h15" stroke="#000" strokeWidth="1.700" /></svg></WindowButton>
          <WindowButton>
            <svg width="16" height="16" viewBox="0 0 16 16" fill="none" stroke="#000" strokeWidth="1.600"><rect x="1" y="4" width="11" height="11" rx="2.500" /><path d="M4 1.500C5 1 5.500 1 6.500 1H10a5 5 0 0 1 5 5v4c0 1 0 1.500-.7 2.300" /></svg>
          </WindowButton>
          <WindowButton><svg width="16" height="16" viewBox="0 0 16 16"><path d="M.5.5l15 15M15.500.5l-15 15" stroke="#000" strokeWidth="1.600" /></svg></WindowButton>
        </WindowButtons>
      </TabStrip>

      <Toolbar>
        <NavButton><svg width="20" height="20" viewBox="0 0 20 20" fill="none" stroke="#f3f0f4" strokeWidth="2.200"><path d="M19 10H2.500M10 1.500L1.800 10l8.200 8.500" /></svg></NavButton>
        <NavButton $dim><svg width="20" height="20" viewBox="0 0 20 20" fill="none" stroke="#f3f0f4" strokeWidth="2.200"><path d="M1 10h16.500M10 1.500l8.200 8.500-8.200 8.500" /></svg></NavButton>
        <NavButton><svg width="20" height="20" viewBox="0 0 20 20" fill="none" stroke="#f3f0f4" strokeWidth="2.400"><path d="M17 5.500A8.300 8.300 0 1 0 18.300 11M18 .5V7h-7" /></svg></NavButton>
        <AddressBar>
          <SiteInfo>
            <svg width="20" height="18" viewBox="0 0 20 18" fill="none" stroke="#fff" strokeWidth="2.200"><circle cx="4" cy="4" r="2.700" /><path d="M10 4h8M2 14h8" /><circle cx="16" cy="14" r="2.700" /></svg>
          </SiteInfo>
          <Url><span>pesonawisata.trenggalekkab.go.id</span>/admin/overviews</Url>
          <BarIcons>
            <svg width="24" height="24" viewBox="0 0 24 24" fill="none" stroke="#c5c1c7" strokeWidth="2.200"><circle cx="9" cy="9" r="6.700" /><path d="M14 14l8 8M6 9h6" /></svg>
            <svg width="24" height="24" viewBox="0 0 24 24" fill="none" stroke="#c5c1c7" strokeWidth="2"><path d="M12 2.500l2.800 6.600 7.100.6-5.400 4.700 1.600 7L12 17.700l-6.100 3.700 1.600-7-5.400-4.700 7.100-.6z" /></svg>
          </BarIcons>
        </AddressBar>
        <ToolbarEnd>
          <svg width="26" height="26" viewBox="0 0 26 26"><path d="M5 4.500h17q1.500 0 1.500 1.500v17q0 1.500-1.500 1.500H5q-1.500 0-1.500-1.500v-5c4.500-1 4.500-6.500 0-7.500V6q0-1.500 1.500-1.500z" fill="none" stroke="#f3f0f4" strokeWidth="2.300" /><path d="M10 4a3.200 3.200 0 0 1 6.400 0zM24 11a3.200 3.200 0 0 1 0 6.400z" fill="#f3f0f4" /></svg>
          <Rule />
          <ProfileDot>A</ProfileDot>
          <svg width="20" height="24" viewBox="0 0 20 24" fill="#f3f0f4"><circle cx="11" cy="3.500" r="2.300" /><circle cx="11" cy="12" r="2.300" /><circle cx="11" cy="20.500" r="2.300" /></svg>
        </ToolbarEnd>
      </Toolbar>

      <Page>
        <Sidebar>
          <Brand>
            <Rocket />
            <BrandName>Nakula<br />Sadewa</BrandName>
          </Brand>
          <Divider />
          {menu.map((m) => (
            <MenuItem key={m.label} $h={m.h} $active={m.active} $shift={m.shift}>
              {m.icon}
              <MenuLabel $dx={m.dx}>{m.label}</MenuLabel>
              {m.sub && <Chevron />}
            </MenuItem>
          ))}
          <Logout>
            <LogoutIcon />
            <MenuLabel $dx={1}>Keluar</MenuLabel>
          </Logout>
        </Sidebar>
        <Scrollbar>
          <ScrollArrow><Arrow /></ScrollArrow>
          <ScrollThumb $h={762} />
          <Grow />
          <ScrollArrow><Arrow down /></ScrollArrow>
        </Scrollbar>
        <Main>
          <Greeting>Hi Admin,</Greeting>
          <Title>Overviews</Title>
          <TopCards>
            <AccessCard>
              <Access><AccessValue>37</AccessValue><AccessLabel>Akses hari ini</AccessLabel></Access>
              <Access><AccessValue>693</AccessValue><AccessLabel>Akses bulan ini</AccessLabel></Access>
              <Access><AccessValue>3042</AccessValue><AccessLabel>Akses tahun ini</AccessLabel></Access>
            </AccessCard>
            <Card><VisitsChart /></Card>
          </TopCards>
          <TotalsCard>
            <div><TotalValue>162</TotalValue><TotalLabel><TreeIcon size={25} />Data Atraksi</TotalLabel></div>
            <div><TotalValue>4</TotalValue><TotalLabel $gap={8}><ClocheIcon />Data Wisata Kuliner</TotalLabel></div>
            <div><TotalValue>187</TotalValue><TotalLabel><UsersIcon size={24} />Data User</TotalLabel></div>
          </TotalsCard>
        </Main>
        <Scrollbar>
          <ScrollArrow><Arrow /></ScrollArrow>
          <ScrollThumb $h={535} />
          <Grow />
          <ScrollArrow><Arrow down /></ScrollArrow>
        </Scrollbar>
      </Page>

      <Taskbar>
        <Weather>
          <svg width="44" height="40" viewBox="0 0 44 40">
            <path d="M30 8c9 12 3 27-10 27-8 0-13-5-15-11 14 5 25-2 25-16z" fill="#f5a01e" />
            <path d="M8 20a6 6 0 0 1 0-10c1-7 10-8 12-2 5 0 7 5 6 8 0 3-2 4-4 4z" fill="url(#cloud)" />
            <path d="M22 35a5 5 0 0 1-1-9c1-6 10-7 12-2 5 0 6 4 5 7 0 3-2 4-4 4z" fill="url(#cloud)" />
          </svg>
          <Badge $left={21} $bg="#ff99a4" $fg="#000" $fs={17}>1</Badge>
        </Weather>
        <Apps>
          {apps.map((a, i) => (
            <AppSlot key={i}>
              <AppTile $tone={a.tone} $stack={a.stack}>{a.icon}</AppTile>
              {a.badge}
              {a.dot && <RunDot $wide={a.wide} $color={a.color} />}
            </AppSlot>
          ))}
        </Apps>
        <Tray>
          <Glyph $mr={24}><svg width="24" height="24" viewBox="0 0 24 24"><path d="M4 16l8-8 8 8" fill="none" stroke="#fff" strokeWidth="2" /></svg></Glyph>
          <Glyph $mr={24}><svg width="24" height="24" viewBox="0 0 24 24"><path d="M5 14C4 7 9 2 14 4c4 0 6 4 6 7z" fill="#8d8d8d" /><path d="M5 20c-6 0-6-9 0-9 2-3 6-2 8 0h6c6 1 6 9 0 9z" fill="#fff" /><path d="M3 12c3-4 8-3 10-1l5 4-9 3z" fill="#d0d0d0" /></svg></Glyph>
          <Glyph $mr={12}><svg width="24" height="24" viewBox="0 0 24 24" fill="none" stroke="#fff" strokeWidth="1.900"><path d="M1 9.500c6-7 16-7 22 0M4.500 13c4-5 11-5 15 0M8 16.500c2-2.600 6-2.600 8 0" /><circle cx="12" cy="19.500" r="1.300" fill="#fff" /></svg></Glyph>
          <Glyph $mr={12}><svg width="24" height="24" viewBox="0 0 24 24" fill="none" stroke="#fff" strokeWidth="1.700"><path d="M1 9v6.500h4l5 5v-17L5 8.500H1zM13 9c1.700 2 1.700 4.500 0 6.500" /><path d="M16 6c3.500 3.500 3.500 9 0 12.500M19.500 3.500c5 5 5 12.500 0 17.500" stroke="#777" /></svg></Glyph>
          <Glyph><svg width="24" height="24" viewBox="0 0 24 24" fill="none" stroke="#fff" strokeWidth="1.700"><path d="M11 5h8q2 0 2 2v10.500q0 2-2 2H9M21.500 10h2v4.500h-2" /><path d="M7 .5c4 3 5 11 0 14.500-6 0-7-9 0-14.500z" fill="#fff" /><path d="M7 13v3c0 3-3 5-6 4" /></svg></Glyph>
          <Clock>18:49<br />19/08/2024</Clock>
          <Glyph $ml={11}>
            <svg width="24" height="24" viewBox="0 0 24 24"><path d="M12 1c-5 0-7 3.500-7 8v5l-3 4v1h20v-1l-3-4V9" fill="#fff" /><path d="M8.500 20.500h7c-1 3-6 3-7 0z" fill="#fff" /><path d="M13 1h10v8h-6z" fill="#1c1c1c" /><path d="M8.500 8.500h5.500l-5.500 6.500h5.500" fill="none" stroke="#1c1c1c" strokeWidth="1.800" /><path d="M16 2h5l-5 6h5" fill="none" stroke="#fff" strokeWidth="1.700" /></svg>
          </Glyph>
          <Copilot>
            <svg width="36" height="36" viewBox="0 0 36 36">
              <path d="M12 1h12c3 0 4 4 5 8h-6c-3 0-4 2-5 5l-3 9c-1 2-2 3-4 3H4c-4 0-5-3-4-7L5 6c1-3 3-5 7-5z" fill="url(#copA)" />
              <path d="M12 1h12c3 0 4 4 5 8h-6c-3 0-3-8-11-8z" fill="#2158d8" />
              <path d="M25 9h6c4 0 5 3 4 7l-3 10H16l4-13c1-3 3-4 5-4z" fill="url(#copB)" />
            </svg>
            <PreTag>PRE</PreTag>
          </Copilot>
        </Tray>
      </Taskbar>
    </Screen>
  );
}
